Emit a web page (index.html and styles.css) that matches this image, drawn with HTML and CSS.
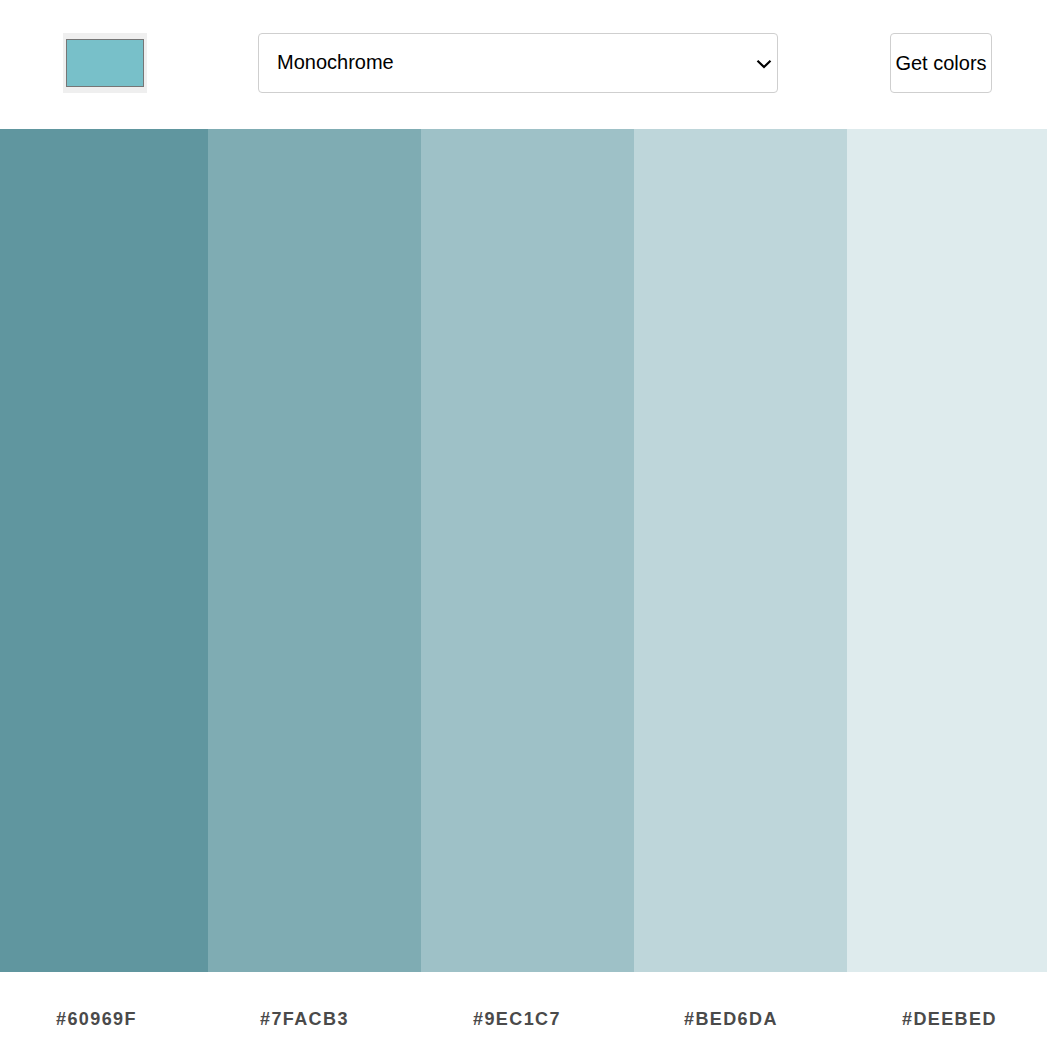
FILE: index.html
```html
<!DOCTYPE html>
<html lang="en">
<head>
<meta charset="utf-8">
<title>Color scheme</title>
<link rel="stylesheet" href="styles.css">
</head>
<body>
<header class="toolbar">
  <div class="picker"><div class="picker-swatch"></div></div>
  <div class="select">
    <span class="select-text">Monochrome</span>
    <svg class="chevron" width="16" height="10" viewBox="0 0 16 10"><path d="M1.5 1.8 L8 8 L14.5 1.8" fill="none" stroke="#000" stroke-width="2.2"/></svg>
  </div>
  <button class="btn">Get colors</button>
</header>
<main class="palette">
  <div class="col c1"><div class="bar"></div><div class="label">#60969F</div></div>
  <div class="col c2"><div class="bar"></div><div class="label">#7FACB3</div></div>
  <div class="col c3"><div class="bar"></div><div class="label">#9EC1C7</div></div>
  <div class="col c4"><div class="bar"></div><div class="label">#BED6DA</div></div>
  <div class="col c5"><div class="bar"></div><div class="label">#DEEBED</div></div>
</main>
</body>
</html>
```
FILE: styles.css
```css
* { box-sizing: border-box; }
html, body { margin: 0; padding: 0; background: #fff; }
body { font-family: "Liberation Sans", Arial, sans-serif; width: 1047px; height: 1057px; overflow: hidden; }

.toolbar {
  height: 129px;
  display: flex;
  align-items: flex-start;
  padding: 33px 0 0 63px;
}
.picker {
  width: 84px;
  height: 60px;
  background: #efefef;
  padding: 6px 3px;
}
.picker-swatch {
  width: 100%;
  height: 100%;
  background: #78c0c9;
  border: 1px solid #767676;
}
.select {
  margin-left: 111px;
  width: 520px;
  height: 60px;
  border: 1px solid #cfcfcf;
  border-radius: 4px;
  display: flex;
  align-items: center;
  justify-content: space-between;
  padding: 0 5px 0 18px;
  font-size: 20px;
  color: #000;
}
.select-text { line-height: 1; margin-top: -2px; }
.chevron { margin-top: 1px; }
.btn {
  margin-left: 112px;
  width: 102px;
  height: 60px;
  border: 1px solid #cfcfcf;
  border-radius: 4px;
  background: #fff;
  font-family: "Liberation Sans", Arial, sans-serif;
  font-size: 20px;
  color: #000;
  padding: 0;
}

.palette {
  display: grid;
  grid-template-columns: 208px 213px 213px 213px 200px;
  height: 928px;
}
.col { display: flex; flex-direction: column; }
.bar { height: 843px; }
.label {
  flex: 1;
  display: flex;
  align-items: center;
  font-weight: bold;
  font-size: 18px;
  letter-spacing: 1.4px;
  color: #4a4a4a;
  padding-top: 10px;
}
.c1 .bar { background: #60969f; }
.c2 .bar { background: #7facb3; }
.c3 .bar { background: #9ec1c7; }
.c4 .bar { background: #bed6da; }
.c5 .bar { background: #deebed; }
.c1 .label { padding-left: 56px; }
.c2 .label { padding-left: 52px; }
.c3 .label { padding-left: 52px; }
.c4 .label { padding-left: 50px; }
.c5 .label { padding-left: 55px; }
```
